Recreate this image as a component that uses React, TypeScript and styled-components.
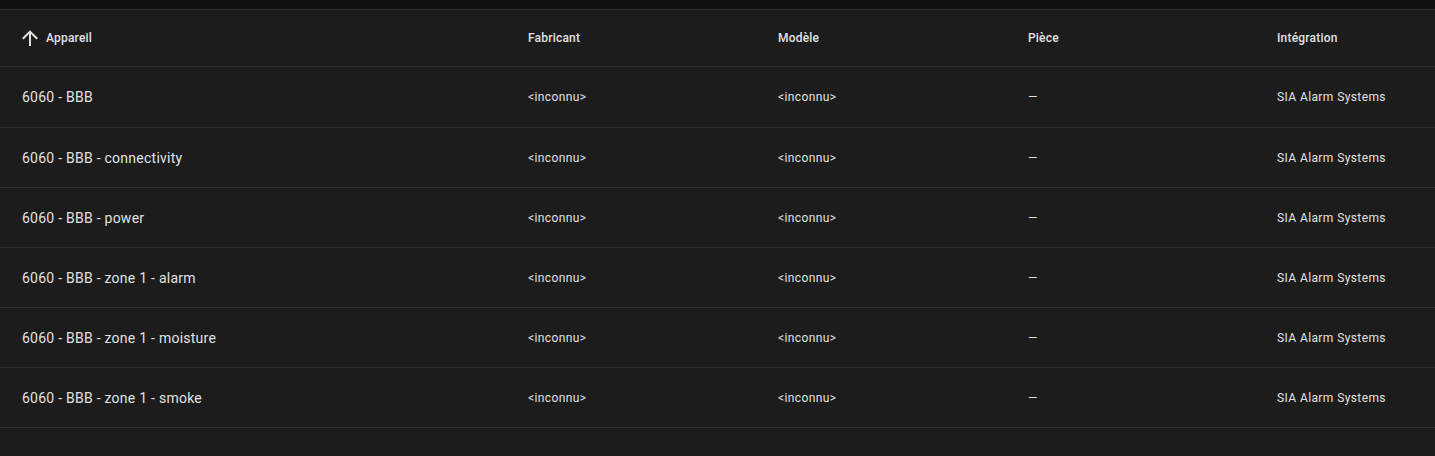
import React from "react";
import styled, { createGlobalStyle } from "styled-components";

const Global = createGlobalStyle`
  html, body { margin: 0; padding: 0; background: #1c1c1c; }
  body { font-family: Roboto, "Noto Sans", sans-serif; -webkit-font-smoothing: antialiased; }
`;

const Page = styled.div`
  width: 1435px;
  height: 456px;
  background: #1c1c1c;
  overflow: hidden;
`;

const TopBand = styled.div`
  height: 9px;
  background: #111111;
  border-bottom: 1px solid #2f2f2f;
`;

const cols = "512px 250px 250px 249px 1fr";

const HeaderRow = styled.div`
  display: grid;
  grid-template-columns: ${cols};
  height: 56px;
  border-bottom: 1px solid #2f2f2f;
  align-items: center;
`;

const HeaderCell = styled.div<{ $first?: boolean }>`
  display: flex;
  align-items: center;
  gap: 4px;
  padding-left: ${(p) => (p.$first ? "18px" : "16px")};
  font-size: 12px;
  font-weight: 500;
  letter-spacing: 0.2px;
  color: #e1e1e1;
  white-space: nowrap;
`;

const Body = styled.div`
  display: flex;
  flex-direction: column;
`;

const Row = styled.div`
  display: grid;
  grid-template-columns: ${cols};
  height: 59px;
  border-bottom: 1px solid #2f2f2f;
  align-items: center;

  &:first-child {
    height: 60px;
  }
`;

const Cell = styled.div<{ $primary?: boolean }>`
  padding-left: ${(p) => (p.$primary ? "22px" : "16px")};
  font-size: ${(p) => (p.$primary ? "14px" : "12px")};
  letter-spacing: ${(p) => (p.$primary ? "0.25px" : "0.4px")};
  color: #e1e1e1;
  white-space: nowrap;
`;

const ArrowUp = () => (
  <svg width="24" height="24" viewBox="0 0 24 24" fill="#e1e1e1">
    <path d="M13,20H11V8L5.5,13.5L4.08,12.08L12,4.16L19.92,12.08L18.5,13.5L13,8V20Z" />
  </svg>
);

const devices = [
  "6060 - BBB",
  "6060 - BBB - connectivity",
  "6060 - BBB - power",
  "6060 - BBB - zone 1 - alarm",
  "6060 - BBB - zone 1 - moisture",
  "6060 - BBB - zone 1 - smoke",
];

export default function App() {
  return (
    <Page>
      <Global />
      <TopBand />
      <HeaderRow>
        <HeaderCell $first>
          <ArrowUp />
          Appareil
        </HeaderCell>
        <HeaderCell>Fabricant</HeaderCell>
        <HeaderCell>Modèle</HeaderCell>
        <HeaderCell>Pièce</HeaderCell>
        <HeaderCell>Intégration</HeaderCell>
      </HeaderRow>
      <Body>
        {devices.map((d) => (
          <Row key={d}>
            <Cell $primary>{d}</Cell>
            <Cell>&lt;inconnu&gt;</Cell>
            <Cell>&lt;inconnu&gt;</Cell>
            <Cell>—</Cell>
            <Cell>SIA Alarm Systems</Cell>
          </Row>
        ))}
      </Body>
    </Page>
  );
}
